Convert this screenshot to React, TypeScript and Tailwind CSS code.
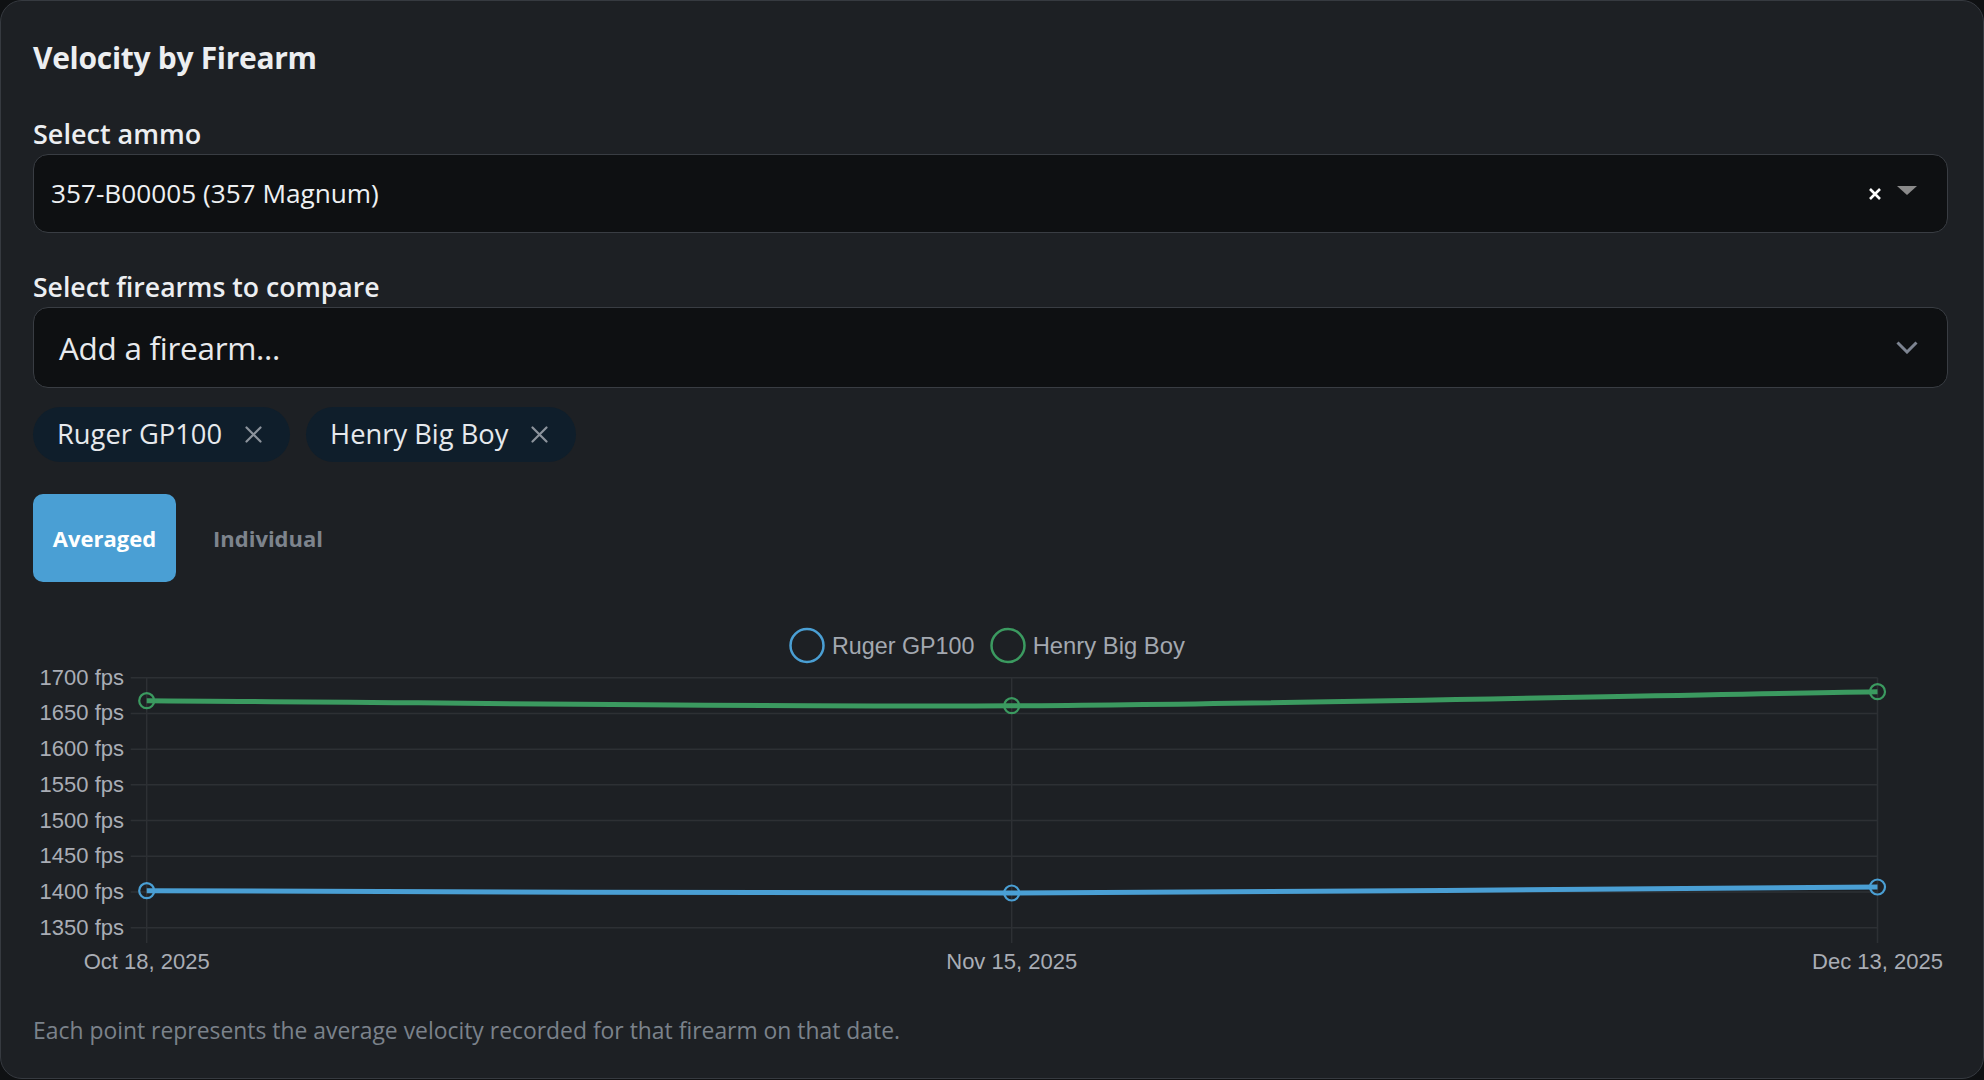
import React from "react";

type Pt = { x: number; y: number };

// chart geometry, in svg units (svg sits at page x 33, y 615)
const X = [113.7, 978.7, 1844.5];
const yOf = (v: number) => 62.7 + (1700 - v) * (250 / 350);
const ticks = [1700, 1650, 1600, 1550, 1500, 1450, 1400, 1350];
const dates = ["Oct 18, 2025", "Nov 15, 2025", "Dec 13, 2025"];

const series = [
  { label: "Ruger GP100", color: "#4a9fd4", values: [1401.8, 1398.6, 1407] },
  { label: "Henry Big Boy", color: "#3b9a60", values: [1667.8, 1660.8, 1680.4] },
];

function splinePath(pts: Pt[], t = 0.3) {
  const cps = pts.map((cur, i) => {
    const prev = pts[i - 1] ?? cur;
    const next = pts[i + 1] ?? cur;
    const d01 = Math.hypot(cur.x - prev.x, cur.y - prev.y);
    const d12 = Math.hypot(next.x - cur.x, next.y - cur.y);
    const sum = d01 + d12 || 1;
    const fa = (t * d01) / sum;
    const fb = (t * d12) / sum;
    return {
      prev: { x: cur.x - fa * (next.x - prev.x), y: cur.y - fa * (next.y - prev.y) },
      next: { x: cur.x + fb * (next.x - prev.x), y: cur.y + fb * (next.y - prev.y) },
    };
  });
  let d = `M ${pts[0].x} ${pts[0].y}`;
  for (let i = 1; i < pts.length; i++) {
    const a = cps[i - 1].next;
    const b = cps[i].prev;
    d += ` C ${a.x} ${a.y}, ${b.x} ${b.y}, ${pts[i].x} ${pts[i].y}`;
  }
  return d;
}

function VelocityChart() {
  const font = '"Liberation Sans", Arial, sans-serif';
  return (
    <svg width={1918} height={370} viewBox="0 0 1918 370" className="block overflow-visible">
      {/* legend */}
      <circle cx={774} cy={30.5} r={16.5} fill="none" stroke="#4a9fd4" strokeWidth={2.5} />
      <text x={799} y={30.5} dominantBaseline="central" fontFamily={font} fontSize={23.3} fill="#a3a8b0">
        Ruger GP100
      </text>
      <circle cx={975} cy={30.5} r={16.5} fill="none" stroke="#3b9a60" strokeWidth={2.5} />
      <text x={999.7} y={30.5} dominantBaseline="central" fontFamily={font} fontSize={23.8} fill="#a3a8b0">
        Henry Big Boy
      </text>

      {/* grid */}
      {ticks.map((v) => (
        <g key={v}>
          <line x1={97.7} x2={X[2]} y1={yOf(v)} y2={yOf(v)} stroke="#2d3034" strokeWidth={1.5} />
          <text
            x={91}
            y={yOf(v) - 0.5}
            textAnchor="end"
            dominantBaseline="central"
            fontFamily={font}
            fontSize={22}
            fill="#a9adb5"
          >
            {v} fps
          </text>
        </g>
      ))}
      {X.map((x, i) => (
        <g key={x}>
          <line x1={x} x2={x} y1={62.7} y2={328} stroke="#2d3034" strokeWidth={1.5} />
          <text
            x={x}
            y={346.7}
            textAnchor="middle"
            dominantBaseline="central"
            fontFamily={font}
            fontSize={22}
            fill="#a9adb5"
          >
            {dates[i]}
          </text>
        </g>
      ))}

      {/* lines */}
      {series.map((s) => {
        const pts = s.values.map((v, i) => ({ x: X[i], y: yOf(v) }));
        return (
          <g key={s.label}>
            <path d={splinePath(pts)} fill="none" stroke={s.color} strokeWidth={5} />
            {pts.map((p) => (
              <circle key={p.x} cx={p.x} cy={p.y} r={7.5} fill="none" stroke={s.color} strokeWidth={2.2} />
            ))}
          </g>
        );
      })}
    </svg>
  );
}

function CloseIcon({ className }: { className?: string }) {
  return (
    <svg viewBox="0 0 17 17" className={className}>
      <path d="M1.5 1.5 L15.5 15.5 M15.5 1.5 L1.5 15.5" stroke="currentColor" strokeWidth={2.2} strokeLinecap="round" />
    </svg>
  );
}

function Pill({ label }: { label: string }) {
  return (
    <div className="flex h-[55px] items-center gap-[23px] rounded-full bg-[#0f1e2b] pl-[24px] pr-[28px]">
      <span className="text-[27.3px] text-[#e6e9ed]">{label}</span>
      <CloseIcon className="h-[17px] w-[17px] text-[#8c939c]" />
    </div>
  );
}

export default function App() {
  return (
    <div className="h-[1080px] w-full bg-[#0f1113] font-['Open_Sans','Noto_Sans',sans-serif]">
      <div className="h-[1079px] rounded-[22px] border border-[#363a40] bg-[#1d2024] pl-[32px] pr-[35px] pt-[37px]">
        <h1 className="h-[40px] text-[30px] font-bold leading-[40px] tracking-[-0.3px] text-[#eceef1]">
          Velocity by Firearm
        </h1>

        <label className="mt-[40px] block text-[27px] font-semibold leading-[32px] text-[#eceef1]">
          Select ammo
        </label>
        <div className="mt-[4px] flex h-[79px] items-center justify-between rounded-[15px] border-[1.5px] border-[#393d43] bg-[#0e1012] pl-[17px] pr-[30px]">
          <span className="text-[26.2px] text-[#eef0f2]">357-B00005 (357 Magnum)</span>
          <div className="flex items-center gap-[16px]">
            <svg viewBox="0 0 12 12" className="h-[12px] w-[12px]">
              <path d="M1 1 L11 11 M11 1 L1 11" stroke="#ffffff" strokeWidth={2.6} />
            </svg>
            <svg viewBox="0 0 20 9" className="mb-[6px] h-[9px] w-[20px]">
              <polygon points="0,0 20,0 10,9" fill="#8a8a8a" />
            </svg>
          </div>
        </div>

        <label className="mt-[38px] block text-[26.6px] font-semibold leading-[32px] text-[#eceef1]">
          Select firearms to compare
        </label>
        <div className="mt-[4px] flex h-[81px] items-center justify-between rounded-[15px] border-[1.5px] border-[#393d43] bg-[#0e1012] pl-[25px] pr-[29px]">
          <span className="text-[31.5px] tracking-[-0.3px] text-[#e8eaed]">Add a firearm...</span>
          <svg viewBox="0 0 22 13" className="h-[13px] w-[22px]">
            <polyline points="1.5,1.5 11,11 20.5,1.5" fill="none" stroke="#7d8491" strokeWidth={3} />
          </svg>
        </div>

        <div className="mt-[19px] flex gap-[16px]">
          <Pill label="Ruger GP100" />
          <Pill label="Henry Big Boy" />
        </div>

        <div className="mt-[32px] flex gap-[17px]">
          <button className="h-[88px] w-[143px] rounded-[10px] bg-[#4a9fd4] text-[22px] font-bold text-white">
            Averaged
          </button>
          <button className="h-[88px] px-[20px] text-[22px] font-bold text-[#7d848d]">Individual</button>
        </div>

        <div className="mt-[33px]">
          <VelocityChart />
        </div>

        <p className="mt-[31px] text-[22.9px] leading-[30px] text-[#7b828b]">
          Each point represents the average velocity recorded for that firearm on that date.
        </p>
      </div>
    </div>
  );
}
